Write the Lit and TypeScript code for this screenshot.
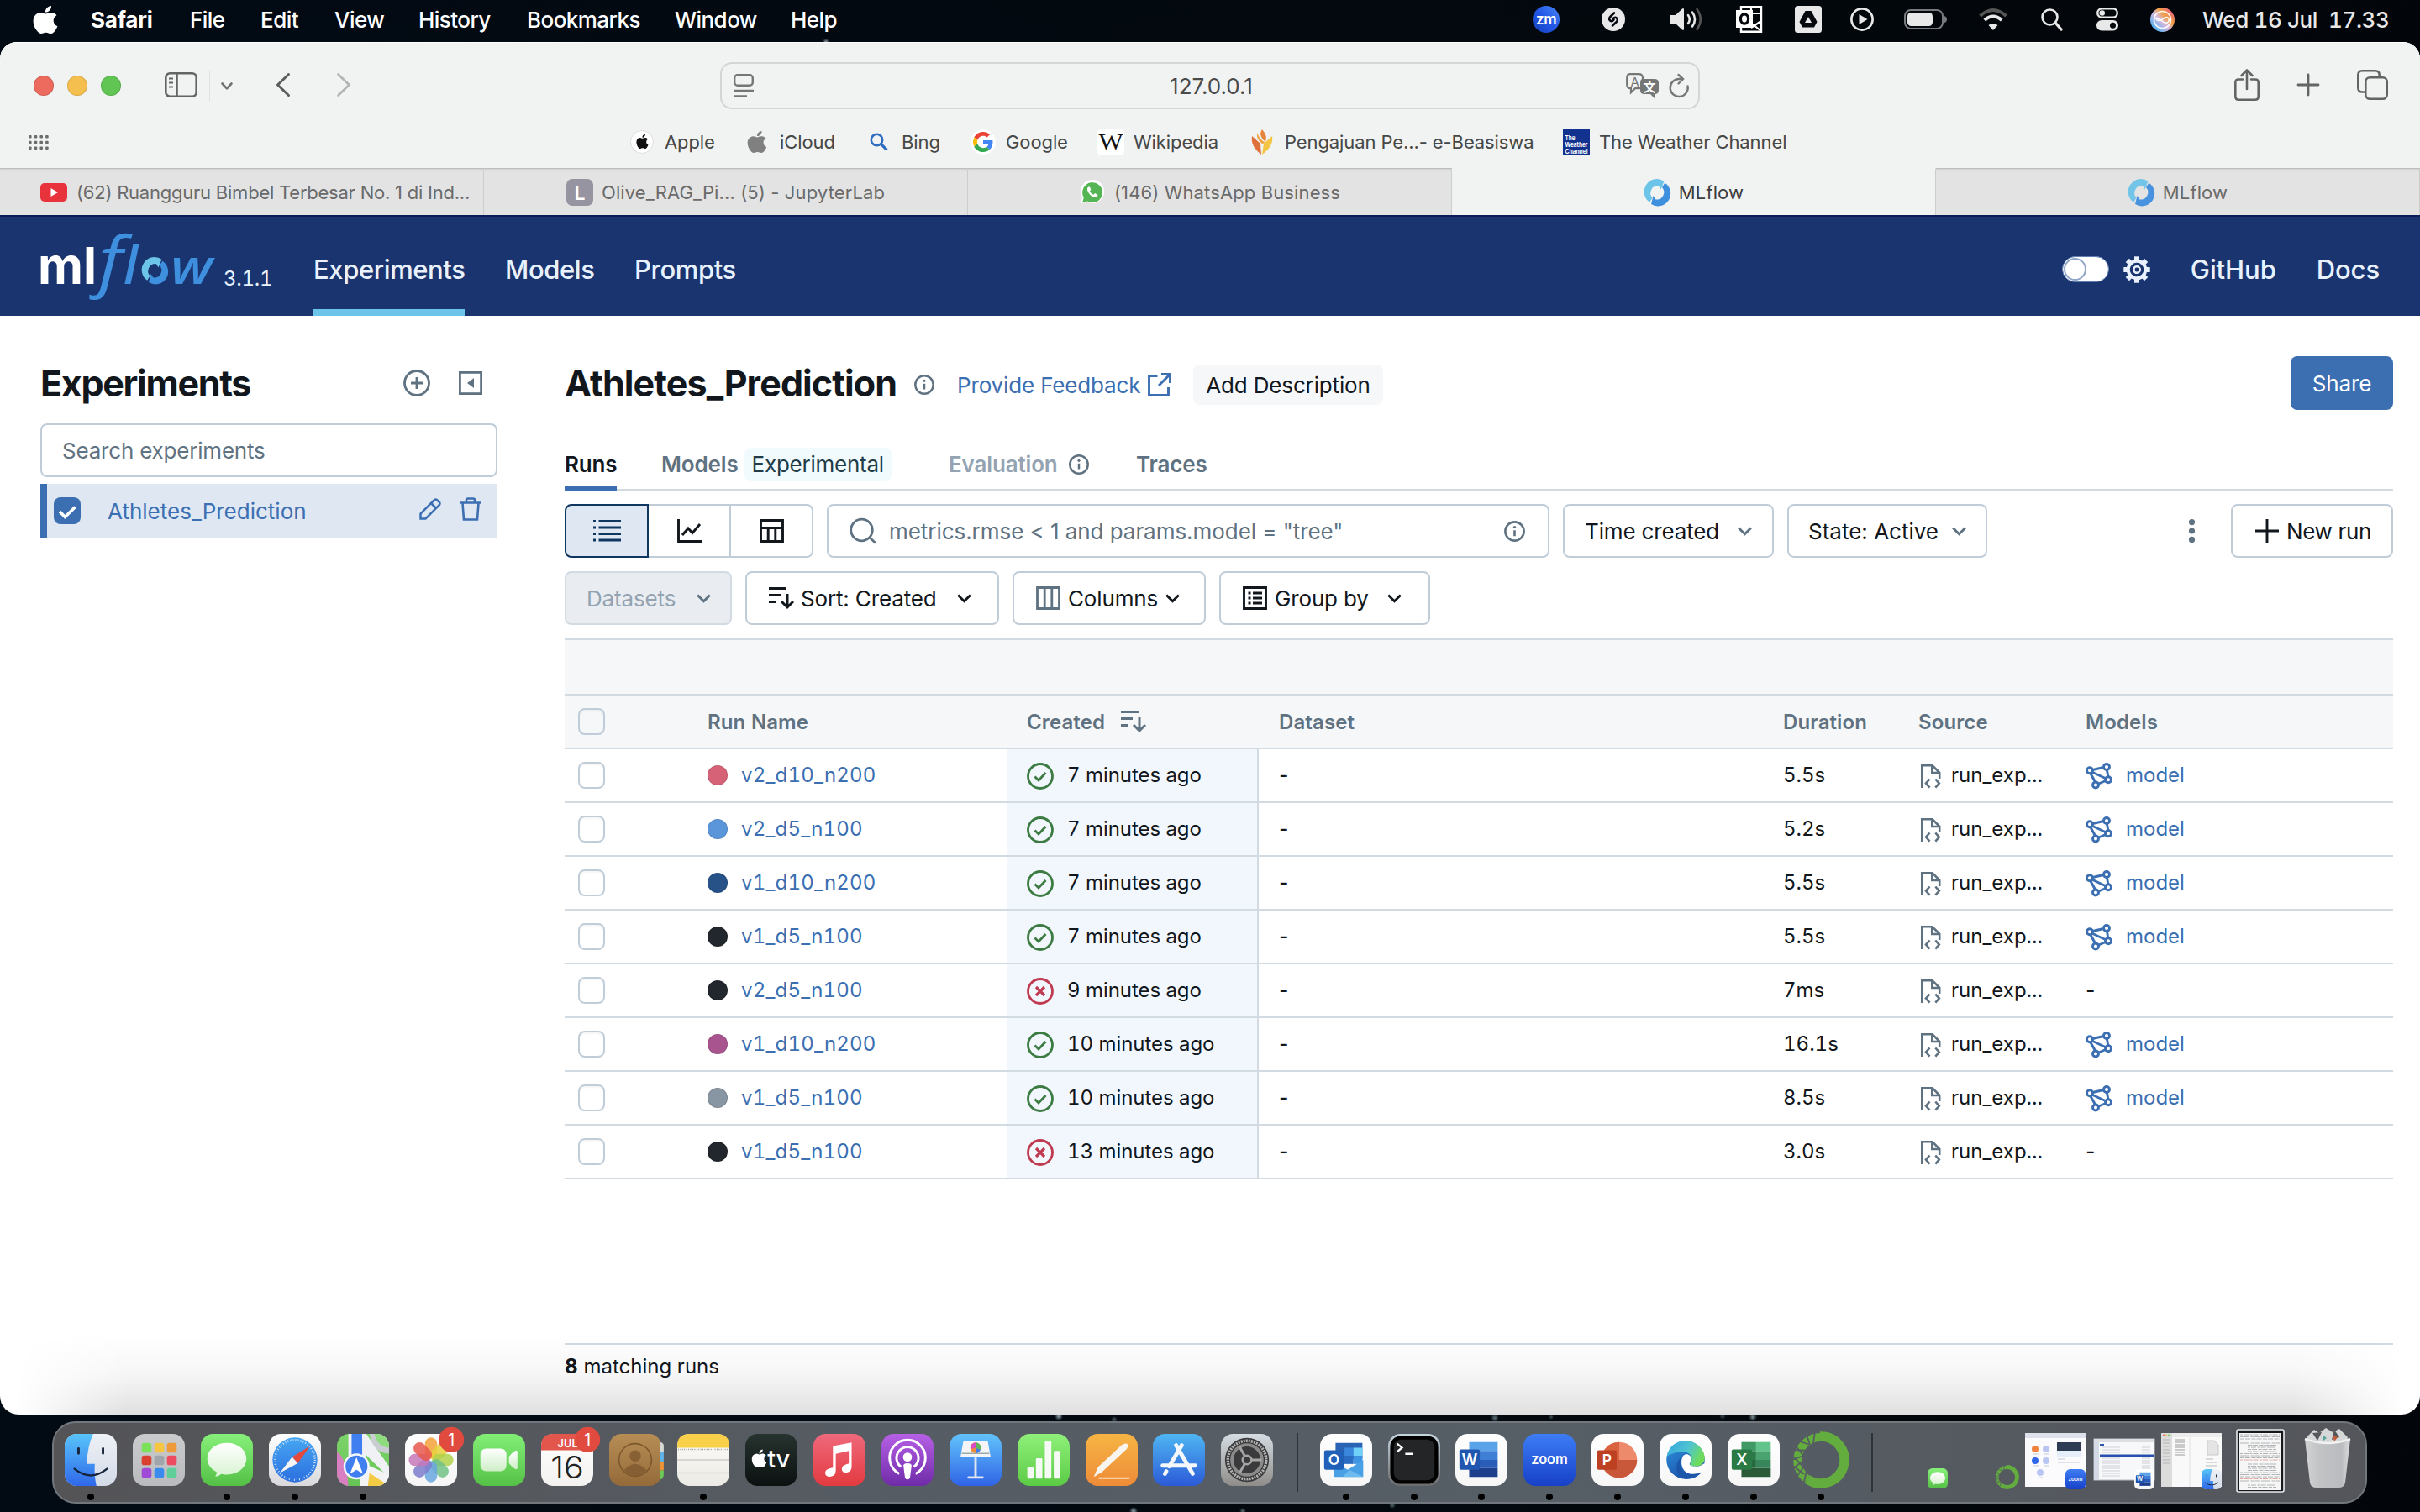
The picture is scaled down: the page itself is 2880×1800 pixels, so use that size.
import { LitElement, html, svg, css, nothing } from "lit";
import { customElement } from "lit/decorators.js";
import { classMap } from "lit/directives/class-map.js";
import { styleMap } from "lit/directives/style-map.js";

const base = css`
  :host { display: block; font-family: Inter, "Liberation Sans", sans-serif; }
  * { box-sizing: border-box; }
  svg { display: block; flex: none; overflow: visible; }
  .row { display: flex; align-items: center; }
`;

const APPLE = "M12.152 6.896c-.948 0-2.415-1.078-3.96-1.04-2.04.027-3.91 1.183-4.961 3.014-2.117 3.675-.546 9.103 1.519 12.09 1.013 1.454 2.208 3.09 3.792 3.039 1.52-.065 2.09-.987 3.935-.987 1.831 0 2.35.987 3.96.948 1.637-.026 2.676-1.48 3.676-2.948 1.156-1.688 1.636-3.325 1.662-3.415-.039-.013-3.182-1.221-3.22-4.857-.026-3.04 2.48-4.494 2.597-4.559-1.429-2.09-3.623-2.324-4.39-2.376-2-.156-3.675 1.09-4.61 1.09zM15.53 3.83c.843-1.012 1.4-2.427 1.245-3.83-1.207.052-2.662.805-3.532 1.818-.78.896-1.454 2.338-1.273 3.714 1.338.104 2.715-.688 3.559-1.701";

/* ---------- menu bar ---------- */

const MENUS = ["Safari", "File", "Edit", "View", "History", "Bookmarks", "Window", "Help"];

@customElement("menu-bar")
class MenuBar extends LitElement {
  static styles = [base, css`
    .bar { display: flex; align-items: center; height: 50px; padding-left: 40px; padding-bottom: 4px; color: #fff; font-size: 26px; font-weight: 500; letter-spacing: -0.55px; }
    .menus { display: grid; grid-template-columns: 118px 84px 88px 100px 129px 176px 138px 300px; margin-left: 40px; }
    .app { font-weight: 700; letter-spacing: -0.2px; }
    .status { display: grid; grid-template-columns: 82px 81px 79px 70px 66px 64px 89px 74px 66px 64px 62px auto; align-items: center; margin-left: 583px; color: #e8e8e8; }
    .clock { white-space: pre; font-variant-numeric: tabular-nums; letter-spacing: -0.4px; }
  `];
  render() {
    return html`<div class="bar">
      <svg width="28" height="33" viewBox="2.5 0 19 24" preserveAspectRatio="none" fill="#fff"><path d=${APPLE} /></svg>
      <div class="menus">${MENUS.map((m, i) => html`<span class=${classMap({ app: i === 0 })}>${m}</span>`)}</div>
      <div class="status">
        <svg width="32" height="32" viewBox="0 0 32 32">
          <defs><linearGradient id="z" x1="1" y1="0" x2="0" y2="1"><stop offset="0" stop-color="#4a86f5" /><stop offset=".5" stop-color="#2257e7" /><stop offset="1" stop-color="#1440b8" /></linearGradient></defs>
          <circle cx="16" cy="16" r="16" fill="url(#z)" />
          <text x="16" y="21.5" text-anchor="middle" font-size="17" font-weight="600" fill="#fff">zm</text>
        </svg>
        <svg width="28" height="28" viewBox="0 0 28 28"><circle cx="14" cy="14" r="14" fill="#e8e8e8" /><path d="M15 6.5l-3.5 3.2c-2.5 2.3-3.2 4-1.2 5.9.9.8 2 .7 3 0l1.2-1M13 21.500l3.500-3.200c2.500-2.300 3.200-4 1.200-5.900-.9-.8-2-.7-3 0l-1.200 1" fill="none" stroke="#05080d" stroke-width="2.6" stroke-linecap="round" /></svg>
        <svg width="39" height="28" viewBox="0 0 39 28"><path d="M0 9h7l8-7.500q2-1.200 2 1v23q0 2.200-2 1l-8-7.500H0z" fill="#e8e8e8" /><path d="M22 9q3.500 5 0 10M27 5.500q6 8.500 0 17" fill="none" stroke="#e8e8e8" stroke-width="2.6" stroke-linecap="round" /><path d="M32.500 2q8.500 12 0 24" fill="none" stroke="#555" stroke-width="2.6" stroke-linecap="round" /></svg>
        <svg width="32" height="32" viewBox="0 0 32 32"><path d="M6 1.200h24v29.600H6z" fill="none" stroke="#fff" stroke-width="2.400" /><path d="M18 1v8h12M20 22l10 8M30 18l-12 8" fill="none" stroke="#fff" stroke-width="2.200" /><rect x="0" y="5" width="20" height="21" fill="#fff" /><ellipse cx="10" cy="15.500" rx="4.600" ry="5.600" fill="none" stroke="#05080d" stroke-width="3.200" /></svg>
        <svg width="32" height="32" viewBox="0 0 32 32"><rect width="32" height="32" rx="3.500" fill="#e8e8e8" /><path d="M12.500 6h7l7 13-3.500 6.500H9L5.500 19z" fill="#05080d" /><path d="M16 13l4 7h-8z" fill="#e8e8e8" /></svg>
        <svg width="28" height="28" viewBox="0 0 28 28"><circle cx="14" cy="14" r="12.600" fill="none" stroke="#e8e8e8" stroke-width="2.700" /><path d="M10.500 8l10 6-10 6z" fill="#e8e8e8" /></svg>
        <svg width="51" height="24" viewBox="0 0 51 24"><rect x="1" y="1" width="45" height="22" rx="7" fill="none" stroke="#777a7e" stroke-width="2" /><rect x="4" y="4" width="30" height="16" rx="4.500" fill="#e8e8e8" /><path d="M48 8q3 1 3 4t-3 4z" fill="#777a7e" /></svg>
        <svg width="34" height="26" viewBox="0 0 34 26"><path d="M1.500 9q15.500-14 31 0" fill="none" stroke="#555" stroke-width="4" /><path d="M6.800 14q10.200-9 20.400 0" fill="none" stroke="#e8e8e8" stroke-width="4" /><path d="M17 26l-5.500-6q5.500-4 11 0z" fill="#e8e8e8" /></svg>
        <svg width="25" height="26" viewBox="0 0 25 26"><circle cx="10.500" cy="10.500" r="9" fill="none" stroke="#e8e8e8" stroke-width="2.600" /><path d="M17 17l7 8" stroke="#e8e8e8" stroke-width="3.400" stroke-linecap="round" /></svg>
        <svg width="26" height="28" viewBox="0 0 26 28"><rect x="1.200" y="1.200" width="23.600" height="10.600" rx="5.300" fill="none" stroke="#e8e8e8" stroke-width="2.400" /><circle cx="6.700" cy="6.500" r="3.300" fill="#e8e8e8" /><rect x="0" y="15" width="26" height="12.500" rx="6.200" fill="#e8e8e8" /><circle cx="19.500" cy="21.200" r="3.500" fill="#05080d" /></svg>
        <svg width="29" height="29" viewBox="0 0 29 29">
          <defs><linearGradient id="s" x1="0.100" y1="0.900" x2="1" y2="0"><stop offset="0" stop-color="#3fb2f0" /><stop offset=".4" stop-color="#d9b8e0" /><stop offset=".6" stop-color="#f0a040" /><stop offset="1" stop-color="#e8459a" /></linearGradient></defs>
          <circle cx="14.500" cy="14.500" r="14.500" fill="url(#s)" /><circle cx="14.500" cy="14.500" r="10" fill="none" stroke="#fff" stroke-width="1.600" opacity=".9" /><path d="M5 13c6-4 10 8 15 5s1-9-4-5-9 3-9-1" fill="none" stroke="#fff" stroke-width="1.600" />
        </svg>
        <span class="clock">Wed 16 Jul  17.33</span>
      </div>
    </div>`;
  }
}

/* ---------- Safari chrome ---------- */

const mlMark = (size: number, faded = false) => html`<svg width=${size} height=${size} viewBox="0 0 32 32" opacity=${faded ? 0.95 : 1}>
  <path d="M7.200 27.800A14.700 14.700 0 0 1 24.500 2.800L20.500 12.500 18 8.200A8.600 8.600 0 0 0 10.500 22.500z" fill="#6cc4e9" />
  <path d="M25.300 4.800A14.700 14.700 0 0 1 9 30L11.500 20 14.200 24.300A8.600 8.600 0 0 0 22 10z" fill="#3f8fdf" /></svg>`;

const bookmarks = [
  { name: "Apple", icon: html`<svg width="28" height="28" viewBox="0 0 28 28"><circle cx="14" cy="14" r="13.500" fill="#fff" stroke="#ddd" /><g transform="translate(5.800 4.800) scale(.72)"><path d=${APPLE} fill="#111" /></g></svg>` },
  { name: "iCloud", icon: html`<svg width="22" height="26" viewBox="2.500 0 19 24" preserveAspectRatio="none"><path d=${APPLE} fill="#808080" /></svg>` },
  { name: "Bing", icon: html`<svg width="22" height="22" viewBox="0 0 22 22"><circle cx="8.500" cy="8.500" r="6.700" fill="none" stroke="#2f6dc0" stroke-width="2.600" /><path d="M13.300 13.300L20.500 20.500" stroke="#2f6dc0" stroke-width="3.200" /></svg>` },
  { name: "Google", icon: html`<svg width="30" height="32" viewBox="0 0 30 32"><circle cx="15" cy="16" r="15" fill="#fff" /><g transform="translate(3 4) scale(.5)"><path fill="#EA4335" d="M24 9.500c3.540 0 6.710 1.220 9.210 3.600l6.850-6.850C35.900 2.380 30.470 0 24 0 14.620 0 6.510 5.380 2.560 13.220l7.980 6.190C12.430 13.720 17.740 9.500 24 9.500z" /><path fill="#4285F4" d="M46.980 24.550c0-1.570-.15-3.090-.38-4.550H24v9.020h12.940c-.58 2.960-2.260 5.480-4.780 7.180l7.730 6c4.510-4.180 7.090-10.360 7.090-17.650z" /><path fill="#FBBC05" d="M10.530 28.590c-.48-1.450-.76-2.990-.76-4.590s.27-3.140.76-4.590l-7.980-6.190C.92 16.460 0 20.120 0 24c0 3.880.92 7.540 2.560 10.780l7.970-6.190z" /><path fill="#34A853" d="M24 48c6.480 0 11.930-2.130 15.890-5.810l-7.730-6c-2.150 1.450-4.920 2.300-8.160 2.300-6.260 0-11.570-4.220-13.470-9.910l-7.980 6.190C6.510 42.620 14.620 48 24 48z" /></g></svg>` },
  { name: "Wikipedia", icon: html`<svg width="32" height="32" viewBox="0 0 32 32"><rect width="32" height="32" rx="5" fill="#fff" /><text x="16" y="25" text-anchor="middle" font-family="Liberation Serif, serif" font-size="28" textLength="29" lengthAdjust="spacingAndGlyphs" fill="#111">W</text></svg>` },
  { name: "Pengajuan Pe...- e-Beasiswa", icon: html`<svg width="28" height="30" viewBox="0 0 28 30"><path d="M14 0q7 8 4 15-4-3-6-9 0-3 2-6z" fill="#e8833a" /><path d="M2 8l10 9 1 13Q0 20 2 8z" fill="#e0703a" /><path d="M26 8L16 17l-2 13Q28 20 26 8z" fill="#f4c443" /><path d="M8 4q-1 8 6 13l4-1Q11 12 8 4z" fill="#f0a03c" /></svg>` },
  { name: "The Weather Channel", icon: html`<svg width="32" height="32" viewBox="0 0 32 32"><rect width="32" height="32" fill="#12328f" /><g fill="#fff" font-size="7.600" font-weight="700" letter-spacing="0"><text x="2.500" y="14" textLength="12" lengthAdjust="spacingAndGlyphs">The</text><text x="2.500" y="22" textLength="27" lengthAdjust="spacingAndGlyphs">Weather</text><text x="2.500" y="29.500" textLength="27" lengthAdjust="spacingAndGlyphs">Channel</text></g></svg>` },
];

const tabs = [
  { title: "(62) Ruangguru Bimbel Terbesar No. 1 di Ind...", kind: "wide", icon: html`<svg width="32" height="22" viewBox="0 0 32 22"><rect width="32" height="22" rx="5" fill="#e8323c" /><path d="M12.500 6l8.500 5-8.500 5z" fill="#fff" /></svg>` },
  { title: "Olive_RAG_Pi... (5) - JupyterLab", kind: "", icon: html`<svg width="32" height="32" viewBox="0 0 32 32"><rect width="32" height="32" rx="7" fill="#9594a0" /><text x="16" y="24.500" text-anchor="middle" font-size="23" font-weight="600" fill="#fff">L</text></svg>` },
  { title: "(146) WhatsApp Business", kind: "", icon: html`<svg width="32" height="30" viewBox="0 0 32 30"><path d="M2 29l2-8A14 14 0 1 1 9 26z" fill="#fff" /><path d="M4 27.500l1.800-6.200A12 12 0 1 1 10 25.500z" fill="#55b554" /><path d="M11.500 8.500c-2 1-2 4 0 7s5 5.500 8 5.500c2 0 3-1.500 3-3l-3.500-2-1.800 1.800c-2-.8-3.500-2.300-4.200-4.300l1.300-1.500-1.300-3.500z" fill="#fff" /></svg>` },
  { title: "MLflow", kind: "active", icon: mlMark(32) },
  { title: "MLflow", kind: "", icon: mlMark(32, true) },
];

@customElement("safari-chrome")
class SafariChrome extends LitElement {
  static styles = [base, css`
    :host { background: #f1f3f2; border-top: 1px solid #fff; }
    .tools { height: 102px; padding-left: 40px; }
    .lights { gap: 16px; }
    .light { width: 24px; height: 24px; border-radius: 50%; border: 1px solid rgba(0, 0, 0, 0.12); }
    .red { background: #ec6a5e; } .yellow { background: #f4bf4f; } .green { background: #61c554; }
    .side { margin-left: 52px; margin-bottom: 2px; }
    .sep { width: 1px; height: 36px; background: #dfe1e0; margin-left: 14px; }
    .chev { margin-left: 13px; }
    .back { margin-left: 52px; margin-bottom: 2px; }
    .fwd { margin-left: 56px; margin-bottom: 2px; }
    .address { display: grid; grid-template-columns: 1fr auto 1fr; align-items: center; width: 1166px; height: 56px; margin-left: 440px; border: 2px solid #d4d6d5; border-radius: 14px; padding: 0 11px 0 14px; font-size: 26px; color: #4a4a4a; }
    .end { justify-content: flex-end; gap: 12px; }
    .share { margin-left: 636px; margin-bottom: 3px; }
    .plus { margin-left: 45px; margin-bottom: 3px; }
    .marks { height: 47px; align-items: flex-start; padding-left: 34px; }
    .dots { margin-top: 8px; }
    .list { display: grid; grid-template-columns: 137px 145px 124px 152px 180px 374px auto; margin-left: 690px; font-size: 22px; color: #464847; letter-spacing: -0.1px; }
    .mark { display: flex; align-items: center; gap: 11px; height: 32px; white-space: nowrap; }
    .icon { display: flex; align-items: center; justify-content: center; width: 32px; height: 32px; flex: none; }
    .tabs { display: flex; height: 56px; }
    .tab { display: flex; flex: none; width: 576px; align-items: center; justify-content: center; gap: 10px; background: #e3e3e3; border-top: 1px solid #bcbebd; border-right: 1px solid #cdcdcd; box-shadow: inset 0 2px 2px -1px rgba(0, 0, 0, 0.08); font-size: 22px; color: #6a6a6a; white-space: nowrap; letter-spacing: 0.12px; }
    .tab.wide { justify-content: flex-start; padding-left: 48px; gap: 11px; letter-spacing: -0.23px; }
    .tab.active { background: #f1f3f2; border-top-color: #f1f3f2; box-shadow: none; color: #3c3c3c; }
  `];
  render() {
    return html`
      <div class="row tools">
        <div class="row lights"><span class="light red"></span><span class="light yellow"></span><span class="light green"></span></div>
        <svg class="side" width="39" height="30" viewBox="0 0 39 30" fill="none" stroke="#636564" stroke-width="2.600"><rect x="1.300" y="1.300" width="36.400" height="27.400" rx="5" /><path d="M14.500 1v28" /><path d="M5 7.500h5M5 12.500h5M5 17.500h5" stroke-width="2" /></svg>
        <span class="sep"></span>
        <svg class="chev" width="14" height="9" viewBox="0 0 14 9" fill="none" stroke="#6f7170" stroke-width="2.600" stroke-linecap="round" stroke-linejoin="round"><path d="M1.500 1.500L7 7.300l5.500-5.800" /></svg>
        <svg class="back" width="16" height="28" viewBox="0 0 16 28" fill="none" stroke="#5b5d5c" stroke-width="3" stroke-linecap="round" stroke-linejoin="round"><path d="M14.500 1.500L1.500 14l13 12.500" /></svg>
        <svg class="fwd" width="16" height="28" viewBox="0 0 16 28" fill="none" stroke="#b2b4b3" stroke-width="2.600" stroke-linecap="round" stroke-linejoin="round"><path d="M1.500 1.500L14.500 14l-13 12.500" /></svg>
        <div class="address">
          <svg width="24" height="28" viewBox="0 0 24 28" fill="none" stroke="#757776" stroke-width="2.400"><rect x="1.200" y="1.200" width="21.600" height="12.600" rx="3.500" /><path d="M0 20h24M0 26.500h16" /></svg>
          <span>127.0.0.1</span>
          <div class="row end">
            <svg width="39" height="30" viewBox="0 0 39 30"><path d="M5 1.200h10q5 0 5 4.500v8q0 4.500-5 4.500h-4l-5 5v-5q-4.800 0-4.800-4.500v-8q0-4.500 3.800-4.500z" fill="none" stroke="#757776" stroke-width="2.200" /><text x="10.700" y="15.500" text-anchor="middle" font-size="15" fill="#757776">A</text><path d="M20 7h14q5 0 5 4.500v9q0 4.500-5 4.500v5l-5-5h-7q-5 0-5-4.500v-9Q17 7 20 7z" fill="#757776" /><text x="28" y="22" text-anchor="middle" font-size="15" font-family="Noto Sans CJK SC, sans-serif" font-weight="700" fill="#fff">文</text></svg>
            <svg width="24" height="28" viewBox="0 0 24 28" fill="none" stroke="#757776" stroke-width="2.400" stroke-linecap="round"><path d="M22.500 14.500a10.500 10.500 0 1 1-10.500-8.500h4.500M11.500 1l5.500 5-5.500 5.500" /></svg>
          </div>
        </div>
        <svg class="share" width="30" height="38" viewBox="0 0 30 38" fill="none" stroke="#636564" stroke-width="2.600" stroke-linecap="round" stroke-linejoin="round"><path d="M10 12.500H5q-3.700 0-3.700 3.700V33q0 3.700 3.700 3.700h20q3.700 0 3.700-3.700V16.200q0-3.700-3.700-3.700h-5M15 24V1.500M8.500 8L15 1.500 21.500 8" /></svg>
        <svg class="plus" width="26" height="26" viewBox="0 0 26 26" stroke="#636564" stroke-width="2.800" stroke-linecap="round"><path d="M13 1v24M1 13h24" /></svg>
        <svg class="plus" width="37" height="36" viewBox="0 0 37 36" fill="none" stroke="#636564" stroke-width="2.600"><rect x="10.300" y="9.300" width="25.400" height="25.400" rx="5" /><path d="M10 26.500H6.300q-5 0-5-5V6.300q0-5 5-5h15.400q5 0 5 5v3" /></svg>
      </div>
      <div class="row marks">
        <svg class="dots" width="24" height="18" viewBox="0 0 24 18" fill="#6b6d6c">${[0, 1, 2].map((r) => [0, 1, 2, 3].map((c) => svg`<rect x=${c * 6.700} y=${r * 6.700} width="3.600" height="3.600" rx="1" />`))}</svg>
        <div class="list">${bookmarks.map((b) => html`<div class="mark"><span class="icon">${b.icon}</span>${b.name}</div>`)}</div>
      </div>
      <div class="tabs">${tabs.map((t) => html`<div class="tab ${t.kind}">${t.icon}<span>${t.title}</span></div>`)}</div>`;
  }
}

/* ---------- MLflow page ---------- */

const infoIcon = (size: number) => html`<svg width=${size} height=${size} viewBox="0 0 24 24" fill="none" stroke="#5f7281" stroke-width="2.500"><circle cx="12" cy="12" r="10.700" /><path d="M12 10.800v6.700" /><circle cx="12" cy="7.300" r="1.600" fill="#5f7281" stroke="none" /></svg>`;
const chevron = (color: string, cls = "") => html`<svg class=${cls} width="17" height="11" viewBox="0 0 17 11" fill="none" stroke=${color} stroke-width="2.900"><path d="M1.200 1.500l7.300 7.200 7.300-7.200" /></svg>`;
const sortIcon = (color: string) => html`<svg width="30" height="26" viewBox="0 0 30 26" fill="none" stroke=${color} stroke-width="3"><path d="M0 1.500h21M0 9.500h14M0 17.500h8M22 8v16M15 17l7 7 7-7" /></svg>`;

@customElement("ml-header")
class MlHeader extends LitElement {
  static styles = [base, css`
    .bar { height: 120px; background: #19346f; border-top: 2px solid #0b1c56; padding: 0 48px; display: flex; color: #e9f2fc; }
    .logo { margin-top: 18px; }
    .version { font-size: 24px; margin: 59px 50px 0 10px; line-height: 30px; width: 57px; letter-spacing: -0.25px; font-variant-numeric: tabular-nums; }
    nav { display: grid; grid-template-columns: 228px 154px auto; font-size: 31px; font-weight: 500; letter-spacing: -0.4px; line-height: 40px; }
    .link { height: 118px; padding-top: 43px; justify-self: start; }
    .on { border-bottom: 8px solid #6cc5e9; width: 180px; }
    .right { margin-left: auto; height: 118px; font-size: 31px; font-weight: 500; letter-spacing: -0.1px; padding-top: 7px; }
    .toggle { width: 56px; height: 31px; border-radius: 16px; background: #fff; padding: 2px; border: 1px solid #5f7fb0; }
    .knob { display: block; width: 27px; height: 27px; border-radius: 50%; border: 2px solid #8fa5c8; background: #fff; margin-top: -1px; margin-left: -1px; }
    .gear { margin: 0 48px 0 17px; }
    .docs { margin-left: 48px; }
  `];
  render() {
    return html`<div class="bar">
      <svg class="logo" width="208" height="82" viewBox="0 0 208 82">
        <text x="-3" y="62" font-size="60" font-weight="700" fill="#fff" textLength="70" lengthAdjust="spacingAndGlyphs">ml</text>
        <g font-family="Open Sans, sans-serif" font-style="italic" fill="#3f8fdf">
          <text x="69" y="62" font-size="79" font-weight="500" textLength="29" lengthAdjust="spacingAndGlyphs">f</text>
          <text x="99" y="62" font-size="62" font-weight="600" textLength="17" lengthAdjust="spacingAndGlyphs">l</text>
          <text x="155" y="62" font-size="58" font-weight="600" textLength="50" lengthAdjust="spacingAndGlyphs">w</text>
        </g>
        <g transform="translate(120 30)">${mlMark(32)}</g>
      </svg>
      <span class="version">3.1.1</span>
      <nav><span class="link on">Experiments</span><span class="link">Models</span><span class="link">Prompts</span></nav>
      <div class="row right">
        <span class="toggle"><span class="knob"></span></span>
        <svg class="gear" width="32" height="32" viewBox="0 0 32 32" fill="none" stroke="#e9f2fc"><circle cx="16" cy="16" r="10.300" stroke-width="4" /><circle cx="16" cy="16" r="3.800" stroke-width="2.600" />${[0, 45, 90, 135, 180, 225, 270, 315].map((a) => svg`<path d="M16 0.300v5.500" stroke-width="6" transform="rotate(${a} 16 16)" />`)}</svg>
        <span>GitHub</span><span class="docs">Docs</span>
      </div>
    </div>`;
  }
}

@customElement("experiment-list")
class ExperimentList extends LitElement {
  static styles = [base, css`
    :host { width: 544px; }
    .head { height: 64px; }
    h2 { margin: 0 auto 0 0; font-size: 43px; font-weight: 700; letter-spacing: -1.3px; color: #11171c; }
    .collapse { margin: 0 18px 0 34px; }
    .search { height: 64px; margin-top: 16px; border: 2px solid #c0cdd8; border-radius: 8px; padding: 0 0 0 24px; font-size: 26px; color: #5f7281; letter-spacing: -0.2px; }
    .item { height: 64px; margin-top: 8px; background: #dfe7f3; border-left: 8px solid #3b6fb2; padding: 0 19px 0 8px; font-size: 26px; color: #3b6fb2; letter-spacing: 0px; }
    .name { margin: 0 auto 0 32px; }
    .trash { margin-left: 22px; margin-bottom: 4px; }
    .edit { margin-bottom: 4px; }
  `];
  render() {
    return html`
      <div class="row head"><h2>Experiments</h2>
        <svg width="32" height="32" viewBox="0 0 32 32" fill="none" stroke="#5f7281" stroke-width="2.800"><circle cx="16" cy="16" r="14.500" /><path d="M16 9v14M9 16h14" /></svg>
        <svg class="collapse" width="28" height="28" viewBox="0 0 28 28"><rect x="1.400" y="1.400" width="25.200" height="25.200" fill="none" stroke="#5f7281" stroke-width="2.800" /><path d="M18 8v12l-8-6z" fill="#5f7281" /></svg>
      </div>
      <div class="row search">Search experiments</div>
      <div class="row item">
        <svg width="32" height="32" viewBox="0 0 32 32"><rect width="32" height="32" rx="8" fill="#3b6fb2" /><path d="M7 17l6.500 6.500L25.500 11.500" fill="none" stroke="#fff" stroke-width="3.600" /></svg>
        <span class="name">Athletes_Prediction</span>
        <svg class="edit" width="26" height="26" viewBox="0 0 26 26" fill="none" stroke="#3b6fb2" stroke-width="2.500"><path d="M1.500 24.500v-6L18 2q1.500-1 3 0l3 3q1 1.500 0 3L7.500 24.500zM14 6l6 6" /></svg>
        <svg class="trash" width="26" height="28" viewBox="0 0 26 28" fill="none" stroke="#3b6fb2" stroke-width="2.600"><path d="M0 6.500h26M8 6V3.500q0-2 2-2h6q2 0 2 2V6M3.500 7l1.500 19.500h16L22.500 7" /></svg>
      </div>`;
  }
}

interface Run { name: string; color: string; ok: boolean; ago: string; time: string; model: boolean }
const RUNS: Run[] = [
  { name: "v2_d10_n200", color: "#d66278", ok: true, ago: "7 minutes ago", time: "5.5s", model: true },
  { name: "v2_d5_n100", color: "#5b96db", ok: true, ago: "7 minutes ago", time: "5.2s", model: true },
  { name: "v1_d10_n200", color: "#265287", ok: true, ago: "7 minutes ago", time: "5.5s", model: true },
  { name: "v1_d5_n100", color: "#22272d", ok: true, ago: "7 minutes ago", time: "5.5s", model: true },
  { name: "v2_d5_n100", color: "#22272d", ok: false, ago: "9 minutes ago", time: "7ms", model: false },
  { name: "v1_d10_n200", color: "#a8558f", ok: true, ago: "10 minutes ago", time: "16.1s", model: true },
  { name: "v1_d5_n100", color: "#8895a2", ok: true, ago: "10 minutes ago", time: "8.5s", model: true },
  { name: "v1_d5_n100", color: "#22272d", ok: false, ago: "13 minutes ago", time: "3.0s", model: false },
];

@customElement("run-table")
class RunTable extends LitElement {
  static styles = [base, css`
    .strip { height: 68px; background: #f5f7f9; border: solid #d2dae2; border-width: 2px 0; }
    .line { display: grid; grid-template-columns: 170px 356px 300px 600px 161px 199px 1fr; height: 64px; border-bottom: 2px solid #d2dae2; font-size: 24px; color: #11171c; font-variant-numeric: tabular-nums; }
    .th { background: #f5f7f9; color: #5f7281; font-weight: 600; letter-spacing: 0.1px; }
    .cell { display: flex; align-items: center; padding-left: 24px; padding-bottom: 1px; white-space: nowrap; }
    .th .cell { padding-bottom: 0; }
    .check { padding: 0 0 0 16px; }
    .name { padding-left: 0; color: #3b6fb2; letter-spacing: 0.2px; }
    .th .name { color: inherit; letter-spacing: 0.1px; }
    .box { width: 32px; height: 32px; border: 2px solid #c0cdd8; border-radius: 8px; box-shadow: inset 0 2px 2px rgba(0, 0, 0, 0.04); }
    .dot { width: 24px; height: 24px; border-radius: 50%; margin-right: 16px; border: 1px solid rgba(0, 0, 0, 0.1); }
    .created { background: #f2f7fe; border-right: 2px solid #d2dae2; padding: 2px 0 0 24px; }
    .th .created { background: none; border-right: 0; gap: 19px; padding-top: 0; }
    .ago { margin-left: 16px; margin-bottom: 3px; letter-spacing: -0.05px; }
    .none { font-weight: 500; padding-left: 22px; }
    .src { gap: 12px; padding-left: 27px; }
    .src svg, .model svg { margin-top: 3px; }
    .model { gap: 16px; color: #3b6fb2; }
  `];
  render() {
    return html`
      <div class="strip"></div>
      <div class="line th">
        <div class="cell check"><span class="box"></span></div><div class="cell name">Run Name</div>
        <div class="cell created"><span>Created</span>${sortIcon("#5f7281")}</div>
        <div class="cell">Dataset</div><div class="cell">Duration</div><div class="cell">Source</div><div class="cell">Models</div>
      </div>
      ${RUNS.map((r) => html`<div class="line">
        <div class="cell check"><span class="box"></span></div>
        <div class="cell name"><span class="dot" style=${styleMap({ background: r.color })}></span>${r.name}</div>
        <div class="cell created">
          <svg width="32" height="32" viewBox="0 0 32 32" fill="none" stroke=${r.ok ? "#3c7c42" : "#c03a50"} stroke-width="2.800"><circle cx="16" cy="16" r="14.500" />${r.ok ? svg`<path d="M9.500 16.500l4.500 4.500 8.500-9" />` : svg`<path d="M11 11l10 10M21 11L11 21" stroke-width="3.200" />`}</svg>
          <span class="ago">${r.ago}</span>
        </div>
        <div class="cell none">-</div>
        <div class="cell">${r.time}</div>
        <div class="cell src"><svg width="24" height="28" viewBox="0 0 24 28" fill="none" stroke="#5f7281" stroke-width="2.600"><path d="M1.300 28V1.300h12.400l8.500 8.500V17M13.300 1.500V10h8.500M10.500 17.500L6 22.600l4.500 5.100M17.300 17.500l4.500 5.100-4.500 5.100" /></svg>run_exp...</div>
        ${r.model
          ? html`<div class="cell model"><svg width="32" height="32" viewBox="0 0 32 32" fill="none" stroke="#3b6fb2" stroke-width="2.900"><path d="M8.500 8.500L21.500 5.500M8 11.200l16 7.500M6 13l5.500 10M25.500 9l1.300 7.500M15.500 25l8.500-3.500" /><circle cx="5" cy="9.300" r="3.500" /><circle cx="25" cy="5" r="3.500" /><circle cx="27" cy="20.300" r="3.500" /><circle cx="12" cy="26.500" r="3.500" /></svg>model</div>`
          : html`<div class="cell none">-</div>`}
      </div>`)}`;
  }
}

@customElement("experiment-view")
class ExperimentView extends LitElement {
  static styles = [base, css`
    :host { width: 2176px; font-size: 26px; color: #11171c; letter-spacing: -0.15px; }
    .head { display: grid; grid-template-columns: 416px 51px 281px auto 1fr; align-items: center; height: 64px; white-space: nowrap; }
    h1 { margin: 0; font-size: 43px; font-weight: 700; letter-spacing: -0.9px; }
    .head > svg { margin-top: 3px; }
    .feedback { display: flex; align-items: center; gap: 9px; color: #3b6fb2; margin-top: 4px; }
    .desc { background: #f6f7f9; border-radius: 8px; height: 48px; width: 226px; display: flex; align-items: center; justify-content: center; margin-top: 4px; }
    .share { justify-self: end; width: 122px; height: 64px; border-radius: 8px; background: #3b6fb2; color: #fff; display: flex; align-items: center; justify-content: center; }
    .tabs { display: grid; grid-template-columns: 115px 342px 223px auto; height: 64px; margin-top: 32px; border-bottom: 2px solid #d2dae2; font-weight: 600; color: #5f7281; justify-content: start; }
    .tab { display: flex; align-items: center; height: 64px; padding-top: 1px; justify-self: start; }
    .on { color: #11171c; border-bottom: 6px solid #3b6fb2; padding-top: 7px; }
    .tag { font-weight: 400; color: #1f3c47; background: #f1fafc; border-radius: 8px; height: 40px; line-height: 40px; padding: 0 9px; margin-left: 7px; letter-spacing: -0.25px; }
    .off { color: #93a3b2; gap: 13px; }
    .bar { display: flex; align-items: center; height: 64px; margin-top: 16px; gap: 16px; white-space: nowrap; }
    .btn { display: flex; align-items: center; height: 64px; border: 2px solid #c0cdd8; border-radius: 8px; padding: 0 24px; }
    .seg { display: flex; width: 296px; height: 64px; }
    .s { flex: 1; display: flex; align-items: center; justify-content: center; border: 2px solid #c0cdd8; border-left: 0; }
    .s:last-child { border-radius: 0 8px 8px 0; }
    .s:first-child { flex: 0 0 100px; border: 2px solid #10375f; background: #dfe7f3; border-radius: 8px 0 0 8px; }
    .query { width: 860px; color: #5f7281; gap: 15px; padding: 0 27px 0 25px; letter-spacing: -0.05px; }
    .query span { margin-right: auto; }
    .end { margin-left: auto; }
    .time { width: 251px; justify-content: space-between; }
    .state { width: 238px; justify-content: space-between; padding: 0 23px; letter-spacing: 0; }
    .kebab { margin: 0 26px 0 auto; }
    .new { width: 193px; gap: 9px; padding: 0 25px 0 27px; letter-spacing: -0.35px; }
    .data { width: 199px; background: #e9edf1; border-color: #d2dae2; color: #93a3b2; padding-right: 23px; }
    .sort { width: 302px; gap: 8px; padding: 0 31px 0 26px; letter-spacing: -0.15px; }
    .cols { width: 230px; gap: 9px; padding: 0 31px 0 26px; }
    .group { width: 251px; gap: 9px; padding: 0 32px 0 26px; }
    .table { display: block; margin-top: 16px; letter-spacing: 0; }
    .foot { margin-top: 195px; border-top: 2px solid #d2dae2; padding-top: 10px; line-height: 32px; font-size: 24px; letter-spacing: 0; }
  `];
  render() {
    return html`
      <div class="head">
        <h1>Athletes_Prediction</h1>${infoIcon(24)}
        <span class="feedback">Provide Feedback<svg width="28" height="28" viewBox="0 0 28 28" fill="none" stroke="#3b6fb2" stroke-width="2.900"><path d="M11.500 3.500H1.500v23h23V17M16 1.500h10.500V12M26.500 1.500L13 15" /></svg></span>
        <span class="desc">Add Description</span>
        <span class="share">Share</span>
      </div>
      <div class="tabs">
        <span class="tab on">Runs</span>
        <span class="tab">Models<span class="tag">Experimental</span></span>
        <span class="tab off">Evaluation${infoIcon(24)}</span>
        <span class="tab">Traces</span>
      </div>
      <div class="bar">
        <div class="seg">
          <span class="s"><svg width="33" height="26" viewBox="0 0 33 26" stroke="#10375f" stroke-width="2.800"><path d="M6.500 1.500H33M6.500 9H33M6.500 16.500H33M6.500 24H33M0 1.500h3M0 9h3M0 16.500h3M0 24h3" /></svg></span>
          <span class="s"><svg width="29" height="28" viewBox="0 0 29 28" fill="none" stroke="#11171c" stroke-width="2.900"><path d="M1.500 0v26.500H29M6 19l7-8 5 5.500L27 6" /></svg></span>
          <span class="s"><svg width="29" height="28" viewBox="0 0 29 28" fill="none" stroke="#11171c" stroke-width="2.900"><path d="M1.500 1.500h26v25h-26zM1.500 10.500h26M10.200 10.500v16M18.800 10.500v16" /></svg></span>
        </div>
        <div class="btn query">
          <svg width="32" height="30" viewBox="0 0 32 30" fill="none" stroke="#5f7281" stroke-width="2.800"><circle cx="14.500" cy="14" r="12.800" /><path d="M23.500 22.500l7.500 7" /></svg>
          <span>metrics.rmse &lt; 1 and params.model = "tree"</span>${infoIcon(25)}
        </div>
        <div class="btn time">Time created${chevron("#5f7281")}</div>
        <div class="btn state">State: Active${chevron("#5f7281")}</div>
        <svg class="kebab" width="9" height="28" viewBox="0 0 9 28" fill="#5f7281"><circle cx="4.500" cy="3.600" r="3.600" /><circle cx="4.500" cy="14" r="3.600" /><circle cx="4.500" cy="24.400" r="3.600" /></svg>
        <div class="btn new"><svg width="28" height="28" viewBox="0 0 28 28" stroke="#11171c" stroke-width="2.900"><path d="M14 0v28M0 14h28" /></svg>New run</div>
      </div>
      <div class="bar">
        <div class="btn data">Datasets${chevron("#5f7281", "end")}</div>
        <div class="btn sort">${sortIcon("#11171c")}Sort: Created${chevron("#11171c", "end")}</div>
        <div class="btn cols"><svg width="29" height="28" viewBox="0 0 29 28" fill="none" stroke="#5f7281" stroke-width="2.800"><path d="M1.500 1.500h26v25h-26zM10.200 1.500v25M18.800 1.500v25" /></svg>Columns${chevron("#11171c", "end")}</div>
        <div class="btn group"><svg width="29" height="28" viewBox="0 0 29 28" fill="none" stroke="#11171c" stroke-width="2.900"><path d="M1.500 1.500h26v25h-26zM12 8h11M12 14h11M12 20h11M6.500 8h3M6.500 14h3M6.500 20h3" /></svg>Group by${chevron("#11171c", "end")}</div>
      </div>
      <run-table class="table"></run-table>
      <div class="foot"><b>8</b> matching runs</div>`;
  }
}

/* ---------- Dock ---------- */

const grad = (id: string, a: string, b: string) => svg`<linearGradient id=${id} x1="0" y1="0" x2="0" y2="1"><stop offset="0" stop-color=${a} /><stop offset="1" stop-color=${b} /></linearGradient>`;
const tile = (id: string, a: string, b: string, inner: unknown, size = 62) => html`<svg width=${size} height=${size} viewBox="0 0 64 64"><defs>${grad(id, a, b)}<clipPath id="${id}c"><rect width="64" height="64" rx="15" /></clipPath></defs><rect width="64" height="64" rx="15" fill="url(#${id})" />${inner}</svg>`;
const badge = svg`<circle cx="57" cy="7" r="15.500" fill="#e14b3f" /><text x="57" y="14" text-anchor="middle" font-size="20" fill="#fff">1</text>`;

const finder = (id: string, size?: number) => tile(id, "#eef1f6", "#d3dbe8", svg`
  <g clip-path="url(#${id}c)"><defs>${grad(id + "l", "#58c4fa", "#2f68ea")}</defs><path d="M0 0h35q-7 15-8 37h10q-1 14 2 27H0z" fill="url(#${id}l)" /></g>
  <path d="M17 18v6M47 18v6" stroke="#16243c" stroke-width="3" stroke-linecap="round" /><path d="M12 43q20 16 40 0" fill="none" stroke="#16243c" stroke-width="2.500" stroke-linecap="round" />`, size);
const messages = (id: string, size?: number) => tile(id, "#86f07a", "#55c046", svg`
  <defs>${grad(id + "b", "#ffffff", "#d8f3d2")}</defs><path d="M32 11c13.500 0 24 8.500 24 19.500S45.500 50 32 50c-2.500 0-5-.3-7-.8-2 1.800-4.500 3-7.500 3.300 1.200-1.500 2-3.500 2-5.600C12.500 43.500 8 37.500 8 30.500 8 19.500 18.500 11 32 11z" fill="url(#${id}b)" />`, size);
const zoomTile = (id: string, size?: number) => tile(id, "#3d7df5", "#1740c8", svg`<text x="32" y="37" text-anchor="middle" font-size="18" font-weight="600" textLength="45" lengthAdjust="spacingAndGlyphs" fill="#fff">zoom</text>`, size);
const word = (id: string, size?: number) => tile(id, "#ffffff", "#f6f6f6", svg`
  <path d="M17 10h35v11H17z" fill="#5ba3e8" /><path d="M17 21h35v11H17z" fill="#3f7fd6" /><path d="M17 32h35v10H17z" fill="#2b5db8" /><path d="M17 42h35v11H17z" fill="#1d3f8c" />
  <rect x="5" y="19" width="25" height="25" rx="2" fill="#2156b0" /><text x="17.500" y="38" text-anchor="middle" font-size="19" font-weight="600" fill="#fff">W</text>`, size);
const anaconda = (size: number) => html`<svg width=${size} height=${size} viewBox="0 0 68 68" fill="none">
  <path d="M33 6A28 28 0 1 1 18 57" stroke="#62ad3e" stroke-width="11.500" />
  <path d="M33 7A27.500 27.500 0 0 0 18 57" stroke="#62ad3e" stroke-width="10" />
  <path d="M27 0l-2 14M17 4l4 12M9 12l12 4M3 22l14 1M0 34l13-5M1 44l12-9M6 53l8-11M4 17l10 13M1 30l12 12M2 42l12 9M14 60l3-13" stroke="#565c62" stroke-width="1.800" /></svg>`;

const petals = ["#f4a03a", "#e8d13c", "#b0d14a", "#72c287", "#6aa7e0", "#7f7ccc", "#c678b8", "#e8584e"];
const leftApps: { icon: unknown; open?: boolean }[] = [
  { open: true, icon: finder("fi") },
  { icon: tile("lp", "#c9cbcd", "#b9bbbe", ["#7be05a", "#f6c643", "#ee9a3a", "#d9402f", "#a0a5ab", "#ec4b60", "#a04bd8", "#3a8bf0", "#5fcf9a"].map((c, i) => svg`<rect x=${11 + (i % 3) * 15.500} y=${11 + Math.floor(i / 3) * 15.500} width="12" height="12" rx="3" fill=${c} />`)) },
  { open: true, icon: messages("me") },
  { open: true, icon: tile("sa", "#ffffff", "#d9d9dc", svg`<defs>${grad("sb", "#46a6f2", "#2b6fe0")}</defs><circle cx="32" cy="32" r="27.500" fill="url(#sb)" /><circle cx="32" cy="32" r="24.500" fill="none" stroke="#cfe6fb" stroke-width="2.600" stroke-dasharray="1 2.200" /><path d="M50.500 15L28.500 28.500 35.500 36z" fill="#e5483c" /><path d="M13.500 48L28.500 28.500 35.500 36z" fill="#f5f5f5" />`) },
  { open: true, icon: tile("mp", "#7dd36b", "#66c455", svg`<g clip-path="url(#mpc)"><path d="M0 22q12 8 14 42H0z" fill="#d77fc0" /><path d="M28 34L64 50v14H28z" fill="#f3f3f5" /><path d="M40 48l24 16H38z" fill="#f4cb45" /><path d="M36 0l28 40v14L22 12z" fill="#f0f1f4" /><path d="M40 0q4 24 24 24V0z" fill="#c9cdd2" /><path d="M46 0q4 16 18 17V0z" fill="#8fdc7e" /><path d="M14 0h22v44H14z" fill="#f0f1f4" /><path d="M18 0h13v44H18z" fill="#3f7ff0" /></g><circle cx="24" cy="40" r="16" fill="#f4f6fa" /><circle cx="24" cy="40" r="13.500" fill="#3f7ff0" /><path d="M24 29l8 20-8-5-8 5z" fill="#fff" />`) },
  { icon: tile("ph", "#ffffff", "#f5f5f5", svg`${petals.map((c, i) => svg`<rect x="24.500" y="4.500" width="15" height="26" rx="7.500" fill=${c} opacity=".85" transform="rotate(${i * 45} 32 32)" />`)}${badge}`) },
  { icon: tile("ft", "#82ee76", "#56c147", svg`<defs>${grad("fb", "#ffffff", "#cdeec6")}</defs><rect x="9" y="18" width="32" height="28" rx="7" fill="url(#fb)" /><path d="M44 28q6-7 9-7.500 1.500 0 1.500 2v19q0 2-1.500 2-3-.5-9-7.500z" fill="url(#fb)" />`) },
  { icon: tile("ca", "#ffffff", "#f3f2f0", svg`<path d="M0 20v-5Q0 0 15 0h34q15 0 15 15v5z" fill="#e2564b" /><text x="20" y="16" font-size="13" font-weight="600" textLength="25" fill="#fff">JUL</text><text x="32" y="55" text-anchor="middle" font-size="38" font-weight="300" textLength="41" lengthAdjust="spacingAndGlyphs" fill="#222">16</text>${badge}`) },
  { icon: tile("co", "#b78d55", "#946a3a", svg`<path d="M63 10q4 1 4 5v7h-4z" fill="#d8d8d8" /><path d="M63 22h4v12h-4z" fill="#5fb4ea" /><path d="M63 34h4v11h-4z" fill="#ee9434" /><path d="M63 45h4v4q0 6-4 7z" fill="#6ccb57" /><circle cx="32" cy="32" r="20" fill="none" stroke="#7c572c" stroke-width="1.600" /><circle cx="32" cy="27" r="7" fill="#7f592f" opacity=".8" /><path d="M18 45q14-16 28 0-14 12-28 0z" fill="#7f592f" opacity=".8" />`) },
  { open: true, icon: tile("no", "#fcfcfa", "#eceae4", svg`<path d="M0 17v-2Q0 0 15 0h34q15 0 15 15v2z" fill="#f8d04a" /><path d="M1 19h62" stroke="#9a9a94" stroke-width="1.500" stroke-dasharray="1 1.500" /><path d="M0 32h64M0 48h64" stroke="#cfcdc6" stroke-width="1.500" />`) },
  { icon: tile("tv", "#26332f", "#0c1110", svg`<g transform="translate(6 19) scale(.92)"><path d=${APPLE} fill="#fff" /></g><text x="27" y="41" font-size="30" font-weight="500" textLength="28" lengthAdjust="spacingAndGlyphs" fill="#fff">tv</text>`) },
  { icon: tile("mu", "#f0697c", "#e23a3f", svg`<path d="M24 15l23-4.500v30q0 6-6 7-6 .5-6-4.500 0-4 5.500-5.500l3-1V21l-16 3.500v21q0 6-6 7-7 .5-7-4.500 0-4 5-5.500l4.500-1z" fill="#fff" />`) },
  { icon: tile("po", "#b660e6", "#6f2ba8", svg`<g fill="none" stroke="#fff" stroke-width="3"><path d="M22 49A22 22 0 1 1 42 49" /><path d="M24 40.500A13.500 13.500 0 1 1 40 40.500" /></g><circle cx="32" cy="28.500" r="5.500" fill="#fff" /><path d="M27 39q0-3 5-3t5 3l-1.800 14q-.5 3-3.200 3t-3.200-3z" fill="#fff" />`) },
  { icon: tile("ke", "#62c4fb", "#2f63e6", svg`<path d="M17 9h30l3.500 19h-37z" fill="#f4f5f8" /><path d="M15 24h34" stroke="#9aa" stroke-width="1.500" /><circle cx="32" cy="17" r="6.500" fill="#f08a3c" /><path d="M32 10.500a6.500 6.500 0 0 1 6 9L32 17z" fill="#5cb85c" /><path d="M32 10.500a6.500 6.500 0 0 0-6 8l6-1.500z" fill="#d84cc4" /><path d="M38 19.500a6.500 6.500 0 0 1-6 4V17z" fill="#3f7ff0" /><path d="M32 29v24" stroke="#dfe6f2" stroke-width="3" /><rect x="22" y="52" width="20" height="3" rx="1.500" fill="#dfe6f2" />`) },
  { icon: tile("nu", "#8ff07a", "#5bcb45", svg`<g fill="#f6faf5"><rect x="12" y="41" width="8" height="14" rx="1.500" /><rect x="22.500" y="30" width="8" height="25" rx="1.500" /><rect x="33.500" y="9" width="8" height="46" rx="1.500" /><rect x="44.500" y="21" width="8" height="34" rx="1.500" /></g>`) },
  { icon: tile("pa", "#f6b544", "#ee8b38", svg`<path d="M10 53l5-12L44 14q4-3 7-2 2 3-1 7L20 47z" fill="#f8f4ee" /><path d="M16 54.500h38" stroke="#fde0bb" stroke-width="2" />`) },
  { icon: tile("as", "#4fb6f2", "#2b5ad8", svg`<g fill="none" stroke="#f4f7fb" stroke-width="5" stroke-linecap="round"><path d="M28.500 14L49 49M35.500 14L20 40M16.500 46L15 49M12 39h40" /></g>`) },
  { icon: tile("se", "#d4dce2", "#8f8d8a", svg`<circle cx="32" cy="32" r="27" fill="#3a3a3c" /><circle cx="32" cy="32" r="23.500" fill="none" stroke="#b5b5b5" stroke-width="3.500" stroke-dasharray="2 1.200" /><circle cx="32" cy="32" r="18.500" fill="none" stroke="#8a8a8a" stroke-width="4" /><path d="M32 32h18M32 32l-9-16M32 32l-9 16" stroke="#a5a5a5" stroke-width="3" /><circle cx="32" cy="32" r="5.500" fill="#3a3a3c" stroke="#a5a5a5" stroke-width="2.500" />`) },
];

const rightApps: { icon: unknown; open?: boolean }[] = [
  { icon: tile("ou", "#ffffff", "#f6f6f6", svg`<path d="M19 11h33v20H19z" fill="#2b63b4" /><path d="M30 17h11v10H30z" fill="#3a86dc" /><path d="M41 17h11v10H41z" fill="#6fd0f8" /><path d="M19 27h22v10H19z" fill="#2a6cc2" /><path d="M41 27h11v10H41z" fill="#3f95e4" /><path d="M17 53V34l17 10 19-12v21z" fill="#4aa0e4" /><path d="M36 44l17 9H28z" fill="#7cc4f3" opacity=".7" /><rect x="5" y="20" width="24" height="24" rx="2" fill="#2160b8" /><text x="17" y="38.500" text-anchor="middle" font-size="18" font-weight="600" fill="#fff">O</text>`) },
  { icon: tile("te", "#c6d4de", "#6c6c6c", svg`<rect x="2.500" y="2.500" width="59" height="59" rx="13" fill="#000" /><rect x="7" y="7" width="50" height="50" rx="9" fill="#242526" /><path d="M11 12l6 5-6 5M21 24.500h9" fill="none" stroke="#fff" stroke-width="2.400" />`) },
  { icon: word("wo") },
  { icon: zoomTile("zo") },
  { icon: tile("pp", "#ffffff", "#f6f6f6", svg`<circle cx="34" cy="32" r="22" fill="#ee8a6c" /><path d="M12 32a22 22 0 0 0 44 0z" fill="#c9573a" /><path d="M34 10a22 22 0 0 0-22 22h22z" fill="#d9623f" /><rect x="7" y="20" width="24" height="24" rx="2" fill="#bd4022" /><text x="19" y="38.500" text-anchor="middle" font-size="18" font-weight="600" fill="#fff">P</text>`) },
  { icon: tile("ed", "#ffffff", "#f6f6f6", svg`<defs><linearGradient id="e1" x1="0" y1="0" x2="1" y2=".4"><stop offset="0" stop-color="#34a4e0" /><stop offset=".6" stop-color="#4fc5d0" /><stop offset="1" stop-color="#6edc5a" /></linearGradient><linearGradient id="e2" x1="0" y1="0" x2=".6" y2="1"><stop offset="0" stop-color="#2f95e0" /><stop offset="1" stop-color="#1a4fa8" /></linearGradient></defs><circle cx="32" cy="32" r="23.500" fill="url(#e2)" /><path d="M9 28C11 16 20 8.500 32 8.500S55.500 18 55.500 30c0 6-5 10-11 10-4 0-7-1-7-3 0-1.500 2-2.500 2-6 0-5-4-9-11-9-10 0-17 4-19.500 6z" fill="url(#e1)" /><path d="M28 28c-6 8-2 22 12 22 5 0 9-1 12-3-5 6-14 10-22 8-10-3-13-20-2-27z" fill="#1b57a8" /><path d="M29 27c4-4 10-1 10 4 0 3.500-2 4.500-2 6 0 2 3 3 7 3 4 0 8-1 11-4l1 5-5 6c-8 4-18 3-22-4-2.500-5-3-11 0-16z" fill="#fff" />`) },
  { icon: tile("ex", "#ffffff", "#f6f6f6", svg`<path d="M17 10h18v11H17z" fill="#3f9a66" /><path d="M35 10h18v11H35z" fill="#62c48a" /><path d="M17 21h18v11H17z" fill="#2c7a48" /><path d="M35 21h18v11H35z" fill="#4aa36e" /><path d="M17 32h18v10H17z" fill="#256a3d" /><path d="M35 32h18v10H35z" fill="#37855a" /><path d="M17 42h36v11H17z" fill="#2a5a38" /><rect x="5" y="19" width="25" height="25" rx="2" fill="#2a7a45" /><text x="17.500" y="38" text-anchor="middle" font-size="19" font-weight="600" fill="#fff">X</text>`) },
  { icon: anaconda(68) },
];

const zoomThumb = html`<svg width="72" height="64" viewBox="0 0 72 64"><rect width="72" height="64" fill="#fbfbfd" /><rect width="72" height="6" fill="#dfe1ea" /><circle cx="12" cy="19" r="4" fill="#f08340" /><g fill="#b9c6f4"><circle cx="25" cy="19" r="4" /><circle cx="25" cy="33" r="4" /><circle cx="18" cy="47" r="4" /></g><circle cx="12" cy="33" r="4" fill="#2f66ea" /><rect x="38" y="11" width="28" height="10" fill="#2d3b53" /><rect x="38" y="21" width="28" height="8" fill="#e6eefc" /><path d="M39 31h9M39 35h26M10 25h6M23 25h5M10 39h6M23 39h5M16 53h5" stroke="#c5cad5" stroke-width="1.200" /></svg>`;
const wordThumb = html`<svg width="72" height="49" viewBox="0 0 72 49"><rect width="72" height="49" fill="#f7f8fa" stroke="#b9bcc2" /><rect width="72" height="4" fill="#dcdee2" /><rect x="0" y="4" width="6" height="45" fill="#d5dbe6" /><rect x="7" y="6" width="5" height="2.500" fill="#2b57b0" />${[10, 13, 16, 23, 26, 29, 32, 35, 38, 41, 44].map((y) => svg`<path d="M9 ${y}h58" stroke="#c9ccd3" stroke-width=".9" stroke-dasharray="22 26 10" />`)}<rect x="7" y="18.500" width="65" height="3" fill="#264fb0" /></svg>`;
const finderThumb = html`<svg width="72" height="64" viewBox="0 0 72 64"><rect width="72" height="64" fill="#f9f9f9" /><rect width="13" height="64" fill="#dcdcdd" /><rect x="13" width="59" height="5" fill="#ececec" />${[8, 12, 16, 20, 24, 28, 32, 36].map((y) => svg`<path d="M2 ${y}h8" stroke="#b5b5b5" stroke-width="1" />`)}${[8, 11, 14, 17, 20, 23, 26].map((y) => svg`<path d="M17 ${y}h11" stroke="#9a9a9a" stroke-width="1" />`)}<path d="M34 5v59" stroke="#e0e0e0" /><path d="M55 9h8l5 5v12H55z" fill="#e4e4e4" stroke="#c8c8c8" /><path d="M53 31h9M53 35h14M53 39h14" stroke="#b9b9b9" /><circle cx="3" cy="2.500" r="1" fill="#ec6a5e" /><circle cx="6" cy="2.500" r="1" fill="#f4bf4f" /><circle cx="9" cy="2.500" r="1" fill="#61c554" /></svg>`;
const docThumb = html`<svg width="58" height="76" viewBox="0 0 58 76"><rect x="1" y="1" width="56" height="74" rx="2" fill="#16181a" stroke="#e8ecef" stroke-width="1.600" /><rect x="4" y="5" width="50" height="68" fill="#f6f6f6" />${Array.from({ length: 26 }, (_, i) => svg`<path d="M${i % 9 > 4 ? 14 : 5} ${7 + i * 2.500}h${i % 9 > 4 ? 34 : 47}" stroke=${i % 9 === 3 ? "#e0a09a" : "#a9abae"} stroke-width=".9" stroke-dasharray="${3 + (i % 3)} 1 6 1.500" />`)}</svg>`;
const trash = html`<svg width="56" height="72" viewBox="0 0 56 72"><defs><linearGradient id="tr" x1="0" x2="1"><stop offset="0" stop-color="#d2d3d5" /><stop offset=".3" stop-color="#c2c4c6" /><stop offset=".8" stop-color="#b9bbbe" /><stop offset="1" stop-color="#dcdddf" /></linearGradient></defs><path d="M3 12L12 3l6 4 8-6 8 5 8-4 10 10-2 7H6z" fill="#d6d7d8" /><path d="M10 7l6 9 5-10zM36 3l-3 12 9-3z" fill="#55575a" /><path d="M22 9l5 4-5 4z" fill="#5aa7a0" /><path d="M34 9l6 3-4 5z" fill="#c05a3a" /><path d="M1 14q27 10 54 0l-6 52q-1 6-8 6H15q-7 0-8-6z" fill="url(#tr)" /><path d="M1 14q27 10 54 0" fill="none" stroke="#f0f0f0" stroke-width="2.500" /></svg>`;

@customElement("mac-dock")
class MacDock extends LitElement {
  static styles = [base, css`
    .dock { display: flex; width: 2755px; height: 98px; margin-left: 62px; border: 2px solid #71777c; border-radius: 28px; background: linear-gradient(90deg, #545457, #565c63 35%, #565e66 65%, #54565b); padding-left: 4px; }
    .slot { display: flex; flex-direction: column; align-items: center; width: 80.950px; height: 94px; flex: none; }
    .rule ~ .slot { width: 80.800px; }
    .art { display: flex; align-items: center; justify-content: center; height: 62px; margin-top: 13px; }
    .lamp { width: 8px; height: 8px; border-radius: 50%; background: #000; margin-top: 9px; }
    .rule { width: 2px; height: 70px; margin: 12px 16px 0 18.500px; background: #2e3338; flex: none; }
    .rule.two { margin: 12px 0 0 19px; }
    .shelf { display: grid; grid-template-columns: 78px 36px 82px 80px 81px 81px auto; align-items: end; height: 79px; margin-left: 67.500px; }
    .mini { height: 30px; display: flex; align-items: center; }
    .mini.m { height: 27px; margin-left: -2px; }
    .thumb { position: relative; height: 71px; display: flex; align-items: center; justify-self: start; }
    .thumb .over { position: absolute; right: 0; bottom: 0; }
    .doc { margin-left: 8px; margin-bottom: -4px; }
    .bin { margin-left: 8px; margin-bottom: 2px; }
  `];
  private slots(items: { icon: unknown; open?: boolean }[], all = false) {
    return items.map((a) => html`<div class="slot"><div class="art">${a.icon}</div>${all || a.open ? html`<span class="lamp"></span>` : nothing}</div>`);
  }
  render() {
    return html`<div class="dock">
      ${this.slots(leftApps)}<span class="rule"></span>${this.slots(rightApps, true)}<span class="rule two"></span>
      <div class="shelf">
        <span class="mini m">${messages("m2", 24)}</span>
        <span class="mini">${anaconda(29)}</span>
        <span class="thumb">${zoomThumb}<span class="over">${zoomTile("z2", 24)}</span></span>
        <span class="thumb">${wordThumb}<span class="over">${word("w2", 24)}</span></span>
        <span class="thumb">${finderThumb}<span class="over">${finder("f2", 24)}</span></span>
        <span class="doc">${docThumb}</span>
        <span class="bin">${trash}</span>
      </div>
    </div>`;
  }
}

@customElement("app-root")
class AppRoot extends LitElement {
  static styles = [base, css`
    :host { width: 2880px; height: 1800px; overflow: hidden;
      background:
        radial-gradient(circle at 1260px 1686px, #8fa3ad 0, transparent 5px),
        radial-gradient(circle at 1326px 1690px, #4c5d66 0, transparent 4px),
        radial-gradient(circle at 1779px 1688px, #5f717a 0, transparent 5px),
        radial-gradient(circle at 1846px 1687px, #42525a 0, transparent 3px),
        radial-gradient(circle at 2086px 1687px, #7c8d94 0, transparent 5px),
        radial-gradient(circle at 2050px 1686px, #3a4850 0, transparent 4px),
        radial-gradient(circle at 1349px 1799px, #8fa2aa 0, transparent 5px),
        radial-gradient(circle at 1657px 1792px, #55666e 0, transparent 4px),
        radial-gradient(circle at 1479px 1799px, #5c6c74 0, transparent 4px),
        radial-gradient(circle at 983px 50px, #9aa4aa 0, transparent 4px),
        linear-gradient(90deg, #020a14, #03090e 60%, #020509); }
    .window { position: relative; height: 1634px; border-radius: 20px 20px 22px 22px; overflow: hidden; background: #fff; }
    .window::after { content: ""; position: absolute; left: 0; right: 0; bottom: 0; height: 96px; background: linear-gradient(rgba(0, 0, 0, 0), rgba(0, 0, 0, 0.035) 50%, rgba(0, 0, 0, 0.12)); -webkit-mask-image: linear-gradient(90deg, transparent 20px, #000 150px, #000 2730px, transparent 2860px); }
    .page { display: flex; gap: 80px; padding: 48px 32px 0 48px; }
    .dock { margin-top: 8px; }
  `];
  render() {
    return html`
      <menu-bar></menu-bar>
      <div class="window">
        <safari-chrome></safari-chrome>
        <ml-header></ml-header>
        <div class="page"><experiment-list></experiment-list><experiment-view></experiment-view></div>
      </div>
      <mac-dock class="dock"></mac-dock>`;
  }
}
